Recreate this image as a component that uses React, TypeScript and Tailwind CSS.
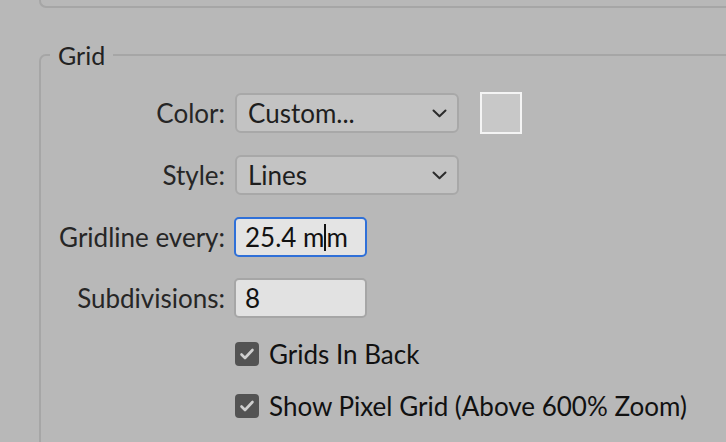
import React from 'react';

const font = { fontFamily: 'Lato, "Open Sans", sans-serif' };

const Chevron = () => (
  <svg width="15" height="9" viewBox="0 0 15 9" fill="none" className="shrink-0">
    <path d="M1.5 1.5L7.5 7.2L13.5 1.5" stroke="#2b2b2b" strokeWidth="2" strokeLinecap="round" strokeLinejoin="round" />
  </svg>
);

const Check = () => (
  <svg width="16" height="14" viewBox="0 0 16 14" fill="none">
    <path d="M2.5 7.5L6 11L13.5 3" stroke="#cfcfcf" strokeWidth="2.6" strokeLinecap="round" strokeLinejoin="round" />
  </svg>
);

const Label = ({ children }: { children: React.ReactNode }) => (
  <div className="w-[185px] shrink-0 pr-[1px] text-right text-[26px] leading-none text-[#262626]">{children}</div>
);

const Select = ({ value }: { value: string }) => (
  <div className="ml-[9px] flex h-[40px] w-[224px] items-center justify-between rounded-[6px] border-2 border-[#a8a8a8] bg-[#c3c3c3] pl-[11px] pr-[10px]">
    <span className="text-[26px] leading-none text-[#1e1e1e]">{value}</span>
    <Chevron />
  </div>
);

const Checkbox = ({ label }: { label: string }) => (
  <div className="flex items-center">
    <div className="ml-[194px] flex h-[24px] w-[24px] items-center justify-center rounded-[4px] bg-[#535353]">
      <Check />
    </div>
    <span className="ml-[10px] text-[26px] leading-none text-[#111]">{label}</span>
  </div>
);

export default function App() {
  return (
    <div className="h-[442px] w-[726px] overflow-hidden bg-[#b8b8b8]" style={font}>
      <div className="ml-[39px] h-[8px] w-[760px] rounded-bl-[7px] border-b-2 border-l-2 border-[#a6a6a6]" />

      <fieldset className="ml-[39px] mt-[33px] h-[480px] w-[760px] rounded-[7px] border-2 border-[#a6a6a6]">
        <legend className="ml-[9px] px-[8px] text-[25px] leading-[28px] text-[#222]">Grid</legend>

        <div className="flex flex-col pt-[24px]">
          <div className="flex h-[40px] items-center">
            <Label>Color:</Label>
            <Select value="Custom..." />
            <div className="ml-[21px] h-[42px] w-[42px] border-2 border-[#f4f4f4] bg-[#c8c8c8]" />
          </div>

          <div className="mt-[22px] flex h-[40px] items-center">
            <Label>Style:</Label>
            <Select value="Lines" />
          </div>

          <div className="mt-[22px] flex h-[40px] items-center">
            <Label>Gridline every:</Label>
            <div className="ml-[8px] flex h-[40px] w-[133px] items-center rounded-[5px] border-2 border-[#2f70d8] bg-[#e4e4e4] pl-[9px]">
              <span className="text-[26px] leading-none text-[#111]">25.4 m</span>
              <span className="h-[27px] w-[2px] bg-[#111]" />
              <span className="text-[26px] leading-none text-[#111]">m</span>
            </div>
          </div>

          <div className="mt-[21px] flex h-[40px] items-center">
            <Label>Subdivisions:</Label>
            <div className="ml-[8px] flex h-[40px] w-[133px] items-center rounded-[5px] border-2 border-[#a6a6a6] bg-[#e2e2e2] pl-[9px]">
              <span className="text-[26px] leading-none text-[#111]">8</span>
            </div>
          </div>

          <div className="mt-[23px] flex flex-col gap-[26px]">
            <Checkbox label="Grids In Back" />
            <Checkbox label="Show Pixel Grid (Above 600% Zoom)" />
          </div>
        </div>
      </fieldset>
    </div>
  );
}
